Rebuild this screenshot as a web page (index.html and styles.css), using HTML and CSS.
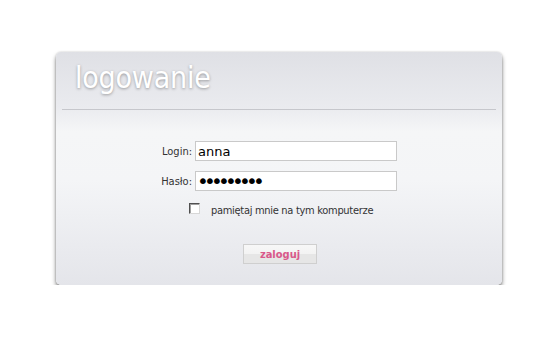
FILE: index.html
```html
<!DOCTYPE html>
<html lang="pl">
<head>
<meta charset="utf-8">
<title>logowanie</title>
<link rel="stylesheet" href="styles.css">
</head>
<body>
<div class="card">
  <div class="head"><h1 class="title">logowanie</h1></div>
  <div class="sep"></div>
  <form class="form">
    <div class="row">
      <label class="lbl" for="login">Login:</label>
      <input class="field" id="login" type="text" value="anna">
    </div>
    <div class="row">
      <label class="lbl" for="pass">Hasło:</label>
      <input class="field pw" id="pass" type="password" value="annaanna1">
    </div>
    <div class="remember">
      <span class="cb"></span>
      <span class="cbtext">pamiętaj mnie na tym komputerze</span>
    </div>
    <div class="actions">
      <button class="btn" type="button">zaloguj</button>
    </div>
  </form>
</div>
</body>
</html>
```
FILE: styles.css
```css
html, body { margin: 0; padding: 0; background: #fff; }
body { padding: 52px 0 0 56px; font-family: "DejaVu Sans Condensed", "DejaVu Sans", sans-serif; }
.card {
  width: 446px;
  height: 233px;
  box-sizing: border-box;
  border-radius: 5px;
  background: linear-gradient(#dfe0e5 0%, #eaebef 24%, #f5f6f7 34%, #f4f5f7 55%, #e4e5ea 100%);
  box-shadow: 0 3px 4px rgba(0,0,0,.5), 0 0 2px rgba(0,0,0,.2);
  display: flex;
  flex-direction: column;
}
.head { height: 57px; padding-left: 19px; display: flex; align-items: flex-start; }
.title {
  margin: 8px 0 0;
  font-family: "DejaVu Sans Condensed", "DejaVu Sans", sans-serif;
  font-weight: normal;
  font-size: 30px;
  line-height: 36px;
  color: #fff;
  letter-spacing: -0.2px;
  text-shadow: 0 1px 3px rgba(0,0,0,.35);
}
.sep { height: 1px; margin: 0 6px; background: #c6c7cc; }
.form { display: flex; flex-direction: column; padding-top: 31px; }
.row { display: flex; align-items: center; height: 20px; margin-bottom: 10px; }
.lbl {
  width: 136px;
  text-align: right;
  padding-right: 3px;
  font-size: 11px;
  color: #333;
}
.field {
  width: 202px;
  height: 20px;
  box-sizing: border-box;
  border: 1px solid #c9c9c9;
  background: #fff;
  margin: 0;
  padding: 0 2px;
  font-family: "DejaVu Sans", Verdana, sans-serif;
  font-size: 13px;
  color: #000;
  outline: none;
}
.pw { font-size: 20px; letter-spacing: -4.8px; padding-left: 1px; line-height: 18px; }
.remember { display: flex; align-items: center; margin: 1px 0 0 133px; height: 12px; }
.cb {
  width: 11px; height: 11px;
  box-sizing: border-box;
  background: #fff;
  border: 1px solid #d7d7d7;
  border-top-color: #505050;
  border-left-color: #505050;
  box-shadow: inset 1px 1px 0 #a0a0a0;
}
.cbtext { margin-left: 11px; font-size: 11px; letter-spacing: -0.3px; color: #333; position: relative; top: 2px; }
.actions { display: flex; margin: 30px 0 0 187px; }
.btn {
  width: 74px; height: 20px;
  box-sizing: border-box;
  padding: 0;
  border: 1px solid #cfcfcf;
  background: linear-gradient(#f7f7f7 0%, #f3f3f3 48%, #e6e6e6 52%, #e6e6e6 100%);
  color: #d9588a;
  font-family: "DejaVu Sans Condensed", "DejaVu Sans", sans-serif;
  font-weight: bold;
  font-size: 11px;
  cursor: pointer;
}
```
